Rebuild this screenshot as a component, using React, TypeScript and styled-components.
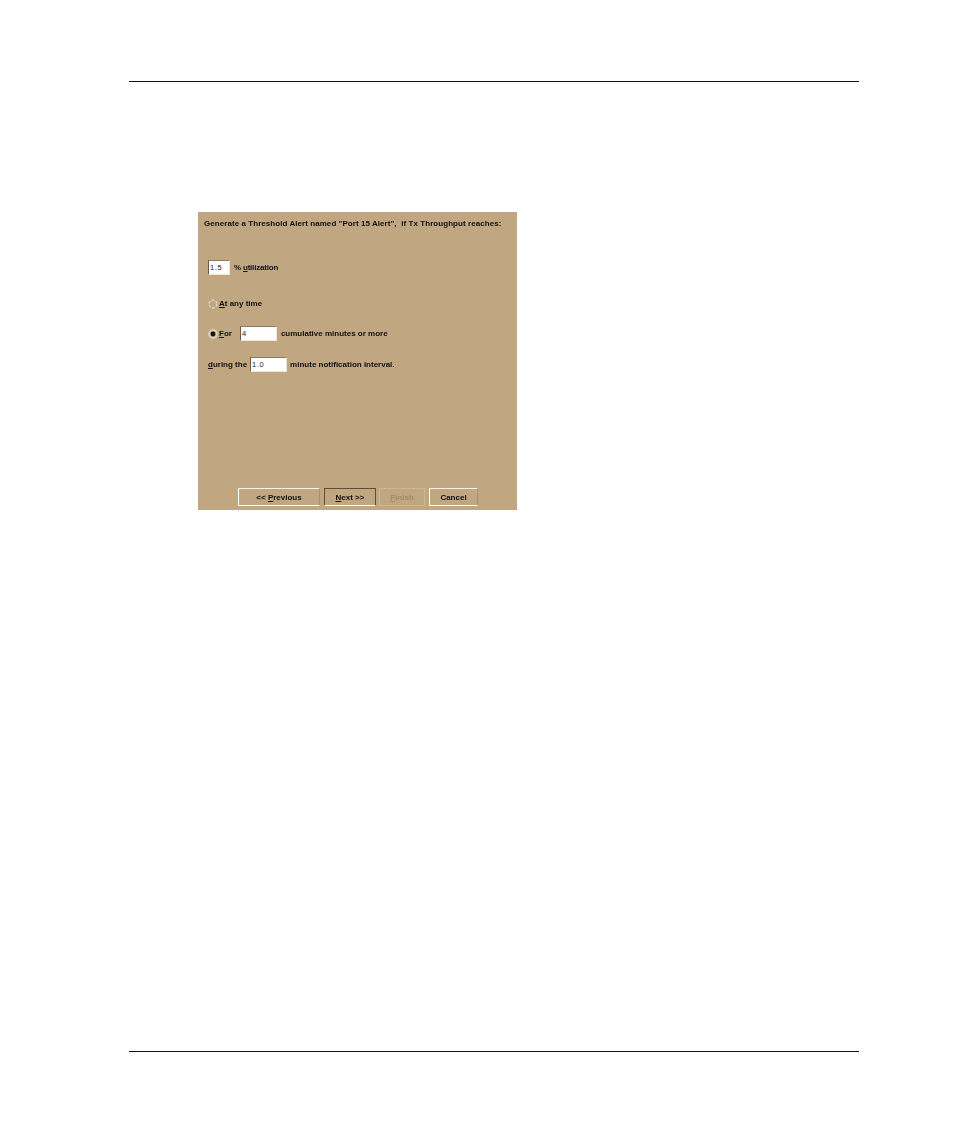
import React from "react";
import styled, { createGlobalStyle } from "styled-components";

const Global = createGlobalStyle`
  html, body { margin: 0; padding: 0; background: #fff; }
  body { font-family: "Liberation Sans", Arial, sans-serif; }
`;

const Page = styled.div`
  width: 954px;
  height: 1145px;
  padding: 81px 95px 0 129px;
  box-sizing: border-box;
  display: flex;
  flex-direction: column;
`;

const Rule = styled.div`
  height: 1px;
  background: #111;
  flex: none;
`;

const Content = styled.main`
  height: 969px;
  padding: 130px 0 0 69px;
  box-sizing: border-box;
`;

const Panel = styled.section`
  width: 319px;
  height: 298px;
  background: #c0a681;
  box-sizing: border-box;
  padding: 6px 0 0 6px;
  display: flex;
  flex-direction: column;
  color: #111;
  font-size: 8px;
  font-weight: 700;
  line-height: 12px;
  white-space: pre;
`;

const Heading = styled.div`
  height: 12px;
  letter-spacing: 0.06px;
  filter: blur(0.25px);
`;

const Row = styled.div<{ $top: number; $left?: number; $gap?: number }>`
  display: flex;
  align-items: center;
  height: 15px;
  margin-top: ${(p) => p.$top}px;
  margin-left: ${(p) => p.$left ?? 0}px;
  gap: ${(p) => p.$gap ?? 4}px;
`;

const Label = styled.span<{ $spacing?: number }>`
  filter: blur(0.25px);
  letter-spacing: ${(p) => p.$spacing ?? 0}px;
`;

const Field = styled.div<{ $width: number; $ml?: number; $mr?: number }>`
  width: ${(p) => p.$width}px;
  height: 15px;
  margin-left: ${(p) => p.$ml ?? 0}px;
  margin-right: ${(p) => p.$mr ?? 0}px;
  box-sizing: border-box;
  background: #fff;
  border: 1px solid;
  border-color: #8d7a5e #efe6d8 #efe6d8 #6b5b44;
  padding-left: 1px;
  font-weight: 400;
  font-size: 7.5px;
  line-height: 13px;
  color: #222;
  letter-spacing: 0.6px;
`;

const Under = styled.span`
  text-decoration: underline;
  text-underline-offset: 1px;
`;

const Radio = styled.svg`
  width: 10px;
  height: 10px;
  flex: none;
  display: block;
`;

const ButtonBar = styled.div`
  margin-top: auto;
  margin-left: 34px;
  margin-bottom: 4px;
  display: flex;
  gap: 3px;
  align-items: stretch;
  height: 18px;
  text-align: center;
`;

const Btn = styled.div<{ $width: number; $kind?: "default" | "disabled"; $ml?: number }>`
  width: ${(p) => p.$width}px;
  margin-left: ${(p) => p.$ml ?? 0}px;
  box-sizing: border-box;
  line-height: 18px;
  border: 1px solid;
  border-color: ${(p) =>
    p.$kind === "default"
      ? "#5e4f3a #5e4f3a #fff #5e4f3a"
      : p.$kind === "disabled"
      ? "#cdb797"
      : "#f6f0e6 #a8906e #fff #fff"};
  color: ${(p) => (p.$kind === "disabled" ? "#a08a66" : "#111")};
`;

const BtnText = styled.span`
  display: block;
  filter: blur(0.25px);
`;

const RadioOff = () => (
  <Radio viewBox="0 0 10 10">
    <circle cx="5" cy="5" r="4" fill="#c0a681" stroke="#f3ece0" strokeWidth="1" strokeDasharray="3 1.2" />
  </Radio>
);

const RadioOn = () => (
  <Radio viewBox="0 0 10 10">
    <circle cx="5" cy="5" r="4.2" fill="#c9b18e" stroke="#efe6d8" strokeWidth="1" />
    <circle cx="5" cy="5" r="2.4" fill="#111" />
  </Radio>
);

export default function App() {
  return (
    <>
      <Global />
      <Page>
        <Rule />
        <Content>
          <Panel>
            <Heading>Generate a Threshold Alert named "Port 15 Alert",  if Tx Throughput reaches:</Heading>
            <Row $top={30} $left={4} $gap={4}>
              <Field $width={22}>1.5</Field>
              <Label $spacing={-0.2}>% <Under>u</Under>tilization</Label>
            </Row>
            <Row $top={21} $left={4} $gap={1}>
              <RadioOff />
              <Label><Under>A</Under>t any time</Label>
            </Row>
            <Row $top={15} $left={4} $gap={1}>
              <RadioOn />
              <Label><Under>F</Under>or</Label>
              <Field $width={37} $ml={7} $mr={3}>4</Field>
              <Label>cumulative minutes or more</Label>
            </Row>
            <Row $top={16} $left={4} $gap={3}>
              <Label><Under>d</Under>uring the</Label>
              <Field $width={37}>1.0</Field>
              <Label>minute notification interval.</Label>
            </Row>
            <ButtonBar>
              <Btn $width={82}><BtnText>{"<< "}<Under>P</Under>revious</BtnText></Btn>
              <Btn $width={52} $kind="default" $ml={1}><BtnText><Under>N</Under>ext {">>"}</BtnText></Btn>
              <Btn $width={46} $kind="disabled"><BtnText><Under>F</Under>inish</BtnText></Btn>
              <Btn $width={49} $ml={1}><BtnText>Cancel</BtnText></Btn>
            </ButtonBar>
          </Panel>
        </Content>
        <Rule />
      </Page>
    </>
  );
}
